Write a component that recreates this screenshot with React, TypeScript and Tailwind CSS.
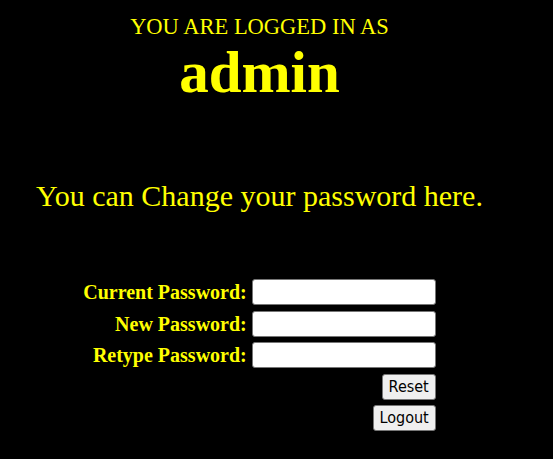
const fields = ["Current Password:", "New Password:", "Retype Password:"];

const App = () => {
  return (
    <div className="min-h-[459px] w-full bg-black font-['Liberation_Serif',serif] text-[#ffff00]">
      <div className="flex w-[519px] flex-col items-center text-center">
        <div className="mt-[14px] text-[22.5px] leading-[26px]">YOU ARE LOGGED IN AS</div>
        <div className="mt-0 text-[59px] font-bold leading-[64px]">admin</div>
        <p className="mt-[75px] text-[30px] leading-[34px]">You can Change your password here.</p>

        <form className="mt-[66px] grid grid-cols-[auto_184px] items-center gap-x-[5px] gap-y-[5.5px]">
          {fields.map((label) => (
            <div key={label} className="contents">
              <label className="text-right text-[20px] font-bold leading-[26px]">{label}</label>
              <input
                type="password"
                className="h-[26px] w-[184px] rounded-[3px] border border-[#767676] bg-white"
              />
            </div>
          ))}
          <div />
          <div className="flex justify-end">
            <button
              type="reset"
              className="h-[26px] rounded-[3px] border border-[#767676] bg-[#efefef] px-[6px] font-['DejaVu_Sans_Condensed','DejaVu_Sans',sans-serif] text-[16px] leading-[24px] text-black"
            >
              Reset
            </button>
          </div>
          <div />
          <div className="flex justify-end">
            <button
              type="button"
              className="h-[26px] rounded-[3px] border border-[#767676] bg-[#efefef] px-[6px] font-['DejaVu_Sans_Condensed','DejaVu_Sans',sans-serif] text-[16px] leading-[24px] text-black"
            >
              Logout
            </button>
          </div>
        </form>
      </div>
    </div>
  );
};

export default App;
